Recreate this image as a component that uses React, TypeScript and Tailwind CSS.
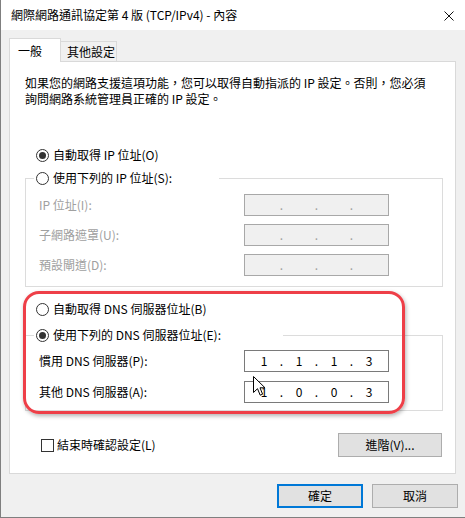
import React from 'react';

const FONT = "font-['Noto_Sans_CJK_TC','Noto_Sans',sans-serif]";

const Radio: React.FC<{ checked?: boolean }> = ({ checked }) => (
  <span className="w-[13px] h-[13px] rounded-full border border-[#333333] bg-white flex items-center justify-center shrink-0">
    {checked && <span className="w-[7px] h-[7px] rounded-full bg-[#333333]" />}
  </span>
);

interface IpBoxProps {
  values?: string[];
  disabled?: boolean;
}

const IpBox: React.FC<IpBoxProps> = ({ values = ['', '', '', ''], disabled }) => (
  <div
    className={`w-[145px] h-[22px] border flex items-center pl-[9px] ${
      disabled ? 'bg-[#f0f0f0] border-[#a8a8a8] text-[#a0a0a0]' : 'bg-white border-[#7a7a7a] text-black'
    }`}
  >
    {values.map((v, i) => (
      <div key={i} className="flex items-center">
        <span className="w-[20px] text-center">{v}</span>
        {i < 3 && <span className="w-[15px] text-center">.</span>}
      </div>
    ))}
  </div>
);

const FieldRow: React.FC<{ label: string; disabled?: boolean; values?: string[] }> = ({ label, disabled, values }) => (
  <div className="flex items-center h-[22px]">
    <span className={`w-[205px] ${disabled ? 'text-[#a0a0a0]' : 'text-black'}`}>{label}</span>
    <IpBox disabled={disabled} values={values} />
  </div>
);

export default function App() {
  return (
    <div className={`relative w-[465px] h-[518px] bg-[#f0f0f0] border-l border-b border-[#7f7f7f] text-[12px] leading-[16px] text-black ${FONT}`}>
      {/* title bar */}
      <div className="h-[30px] bg-white flex items-center justify-between pl-[10px] pr-[11px]">
        <span className="text-[12px]">網際網路通訊協定第 4 版 (TCP/IPv4) - 內容</span>
        <svg width="10" height="10" viewBox="0 0 10 10" className="mt-[1px]">
          <path d="M0.5 0.5 L9.5 9.5 M9.5 0.5 L0.5 9.5" stroke="#111" strokeWidth="1" />
        </svg>
      </div>

      {/* tabs */}
      <div className="flex items-end pl-[8px] mt-[8px]">
        <div className="relative z-10 -mb-px h-[24px] w-[52px] bg-white border border-b-0 border-[#d9d9d9] pl-[8px] flex items-center">
          一般
        </div>
        <div className="h-[20px] w-[56px] border-t border-r border-[#d9d9d9] pl-[6px] flex items-center">
          其他設定
        </div>
      </div>

      {/* panel */}
      <div className="ml-[8px] w-[447px] h-[413px] bg-white border border-[#d9d9d9] flex flex-col">
        <p className="mt-[13px] pl-[15px] whitespace-nowrap">
          如果您的網路支援這項功能，您可以取得自動指派的 IP 設定。否則，您必須
          <br />
          詢問網路系統管理員正確的 IP 設定。
        </p>

        <label className="mt-[40px] ml-[26px] h-[16px] flex items-center gap-[4px]">
          <Radio checked />
          <span>自動取得 IP 位址(O)</span>
        </label>

        <fieldset className="mt-[7px] ml-[15px] w-[418px] border border-[#dcdcdc] px-[13px] pt-[8px] pb-[10px]">
          <legend className="ml-[-5px] px-[2px] w-[185px] h-[16px] flex items-center gap-[4px]">
            <Radio />
            <span>使用下列的 IP 位址(S):</span>
          </legend>
          <div className="flex flex-col gap-[8px]">
            <FieldRow label="IP 位址(I):" disabled />
            <FieldRow label="子網路遮罩(U):" disabled />
            <FieldRow label="預設閘道(D):" disabled />
          </div>
        </fieldset>

        <label className="mt-[14px] ml-[26px] h-[16px] flex items-center gap-[4px]">
          <Radio />
          <span>自動取得 DNS 伺服器位址(B)</span>
        </label>

        <fieldset className="mt-[10px] ml-[15px] w-[418px] border border-[#dcdcdc] px-[13px] pt-[7px] pb-[7px]">
          <legend className="ml-[-5px] px-[2px] w-[249px] h-[16px] flex items-center gap-[4px]">
            <Radio checked />
            <span>使用下列的 DNS 伺服器位址(E):</span>
          </legend>
          <div className="flex flex-col gap-[9px]">
            <FieldRow label="慣用 DNS 伺服器(P):" values={['1', '1', '1', '3']} />
            <FieldRow label="其他 DNS 伺服器(A):" values={['1', '0', '0', '3']} />
          </div>
        </fieldset>

        <div className="mt-[22px] pl-[31px] pr-[13px] flex items-center justify-between">
          <label className="flex items-center gap-[3px]">
            <span className="w-[13px] h-[13px] border border-[#333333] bg-white" />
            <span>結束時確認設定(L)</span>
          </label>
          <button className="w-[104px] h-[24px] bg-[#e1e1e1] border border-[#adadad]">進階(V)...</button>
        </div>
      </div>

      {/* dialog buttons */}
      <div className="mt-[10px] pr-[7px] flex justify-end gap-[9px]">
        <button className="w-[86px] h-[24px] bg-[#e1e1e1] border-2 border-[#0078d7]">確定</button>
        <button className="w-[86px] h-[24px] bg-[#e1e1e1] border border-[#adadad]">取消</button>
      </div>

      {/* red annotation */}
      <div className="absolute left-[22px] top-[291px] w-[382px] h-[123px] border-[3px] border-[#ee3f48] rounded-[16px] shadow-[1px_2px_4px_rgba(0,0,0,0.3)] pointer-events-none" />

      {/* mouse pointer */}
      <svg className="absolute left-[252px] top-[376px]" width="13" height="21" viewBox="0 0 13 21">
        <path d="M0.5 0.5 L0.5 16.5 L4.5 12.7 L7.2 19.2 L9.6 18.2 L7 11.8 L12 11.8 Z" fill="#fff" stroke="#000" strokeWidth="1" strokeLinejoin="miter" />
      </svg>
    </div>
  );
}
